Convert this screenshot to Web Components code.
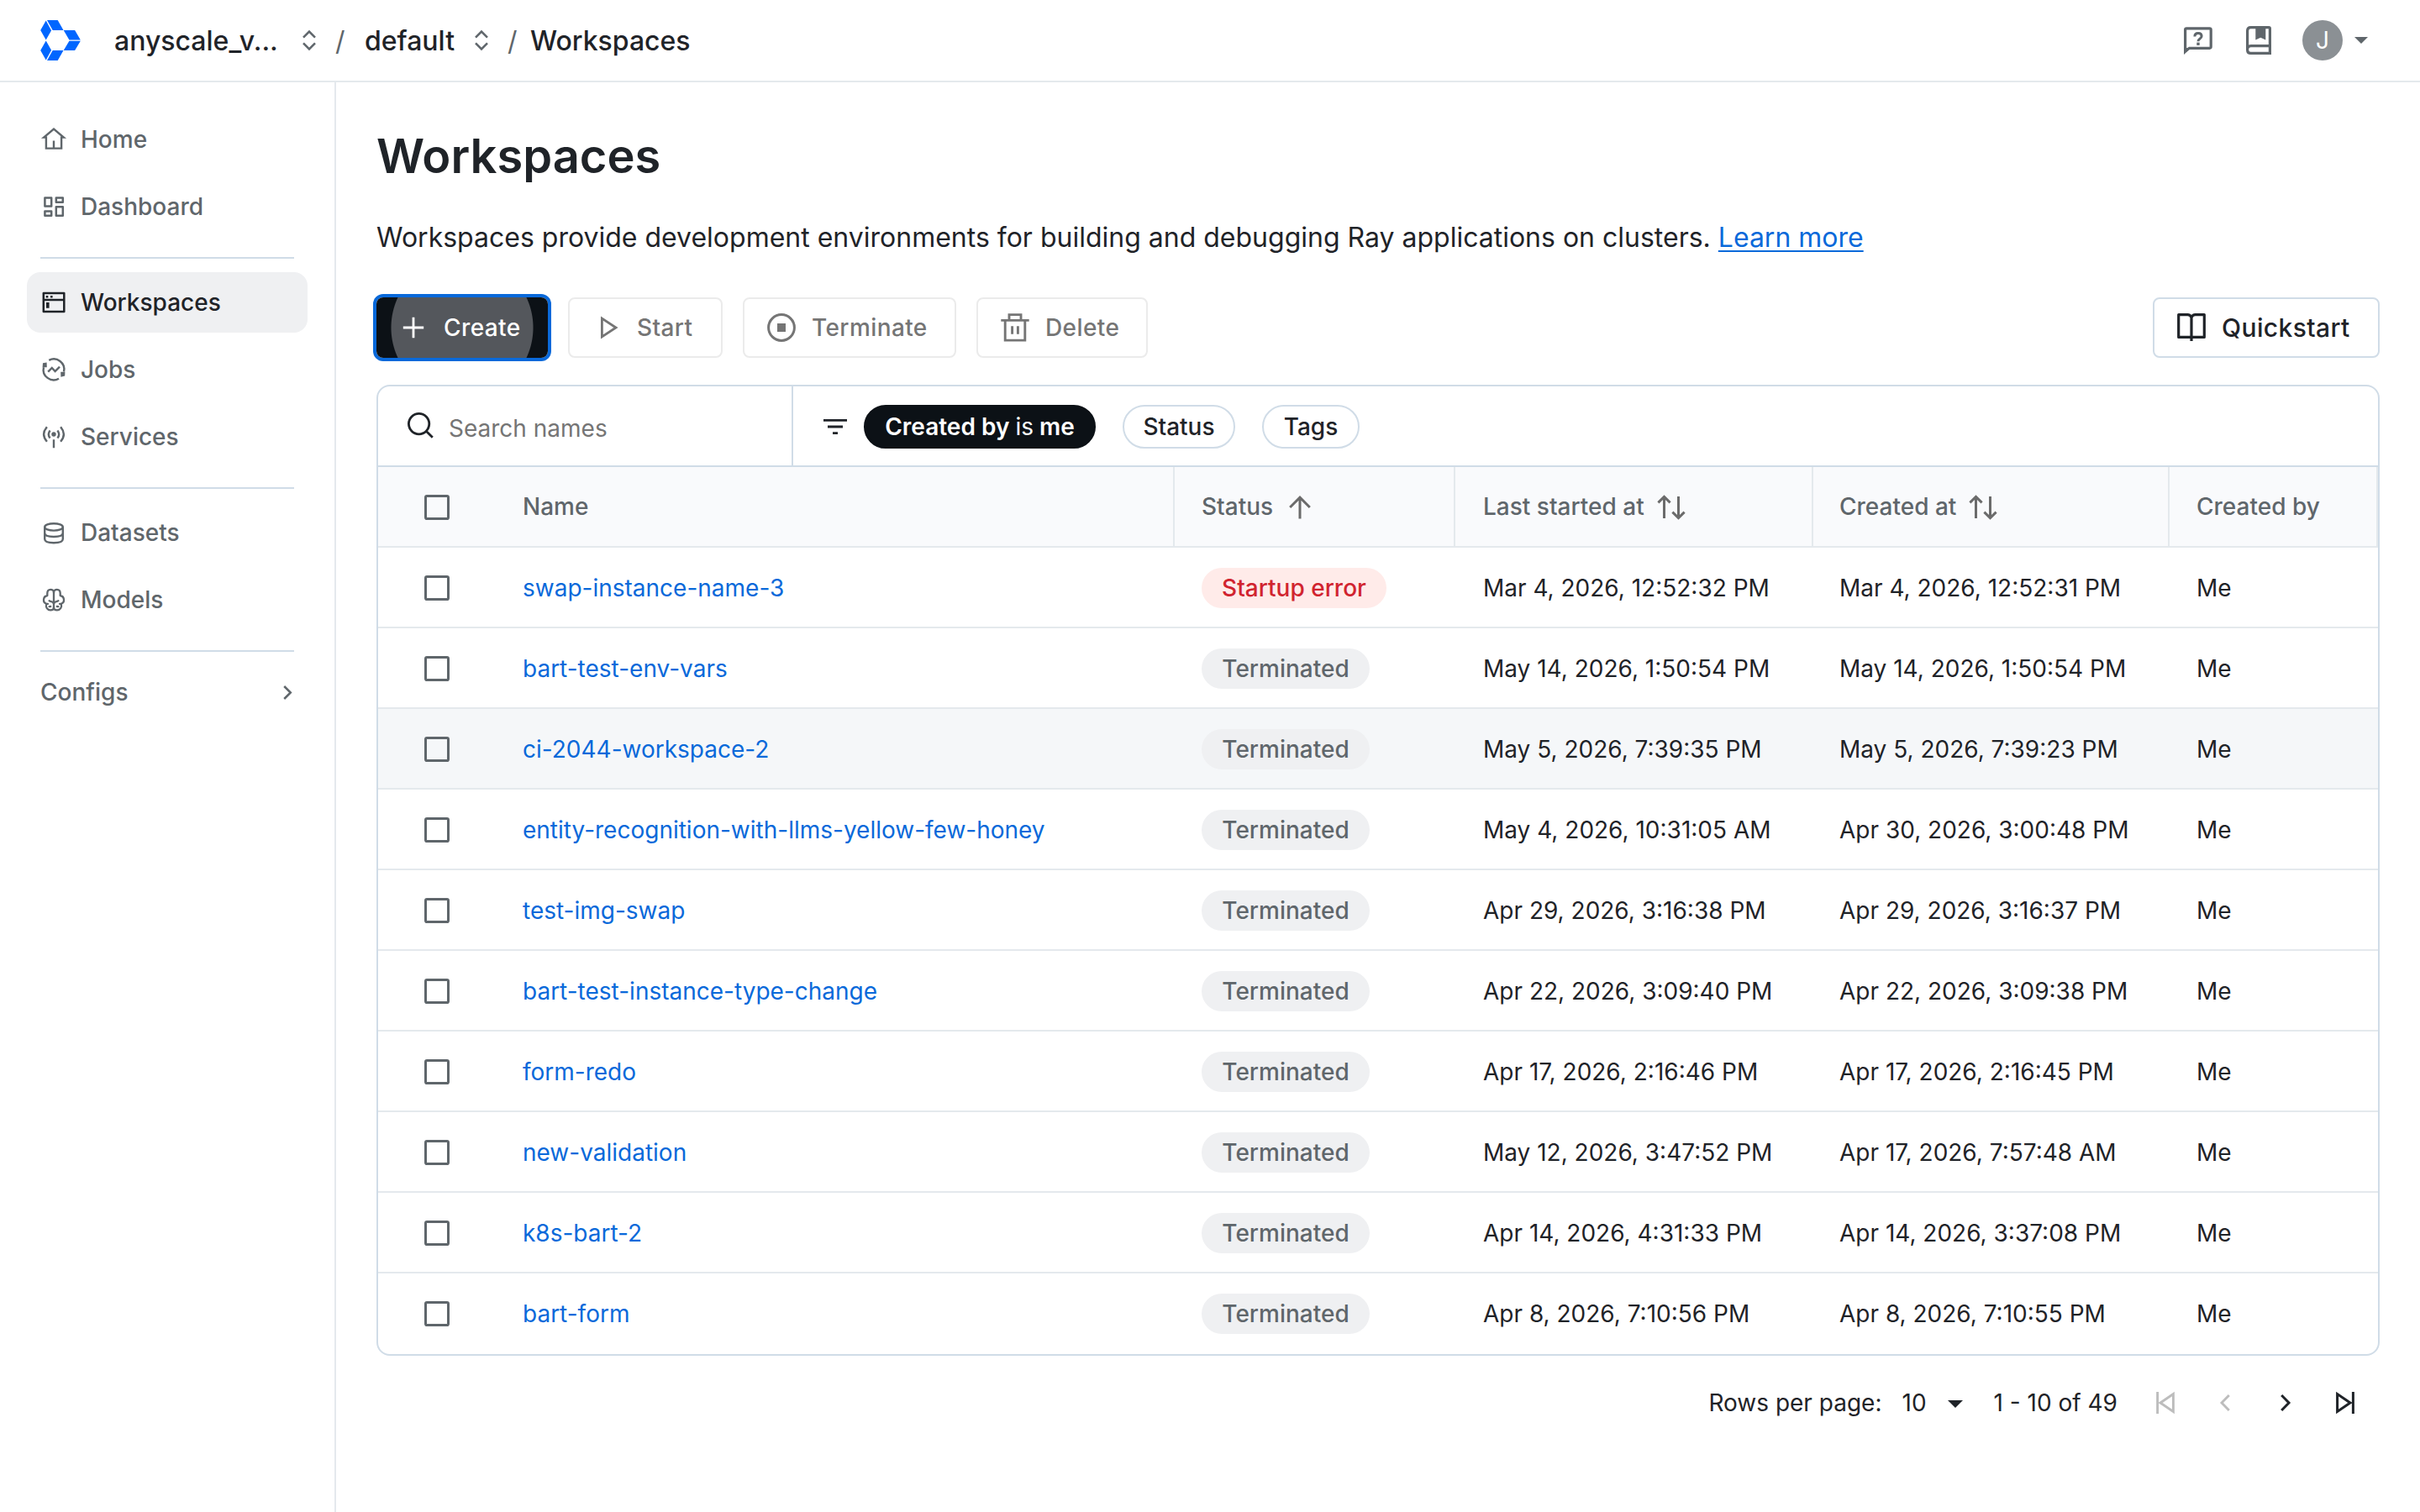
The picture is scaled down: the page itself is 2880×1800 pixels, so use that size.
<!DOCTYPE html>
<html lang="en">
<head>
<meta charset="utf-8">
<title>Workspaces</title>
<style>
  html, body { margin: 0; height: 100%; }
  body {
    background: #fff;
    color: #1f2328;
    font-family: Inter, "Liberation Sans", sans-serif;
    font-size: 28px;
    overflow: hidden;
  }
</style>
</head>
<body>
<app-shell>
  <app-header slot="header"></app-header>
  <side-nav slot="nav">
    <nav-item icon="home">Home</nav-item>
    <nav-item icon="dashboard">Dashboard</nav-item>
    <hr>
    <nav-item icon="workspaces" active>Workspaces</nav-item>
    <nav-item icon="jobs">Jobs</nav-item>
    <nav-item icon="services">Services</nav-item>
    <hr>
    <nav-item icon="datasets">Datasets</nav-item>
    <nav-item icon="models">Models</nav-item>
    <hr class="tight">
    <nav-item expandable>Configs</nav-item>
  </side-nav>
  <workspaces-page></workspaces-page>
</app-shell>

<script>
// name: [width, height, markup]
const ICONS = {
  logo: [48, 48, `<g fill="#0066ff"><path d="M.2 12 6.7.6l6.4 11.6-6.4 11.4zM8 0h12.7l6.8 12H14.7zM27.7 12h13.4l6.7 11.4H34.4zM34.4 24.7h13.4L41.1 36H27.7zM14.7 36h12.8l-6.8 12H8zM6.7 24.4l6.4 11.4-6.4 11.6L.2 36z"/></g>`],
  updown: [16, 24, `<path d="M1 8.6 8 1.6l7 7M1 15.4l7 7 7-7" stroke-width="2.5"/>`],
  chat: [34, 34, `<path d="M1.6 29V3.4Q1.6 1.8 3.2 1.8H30.6Q32.2 1.8 32.2 3.4V23.6Q32.2 25.3 30.6 25.3H6.5Z" stroke-width="3.2"/><path d="M0 24v9l7-6.7z" fill="currentColor" stroke="none"/><path d="M12.9 11.4q0-4 4.1-4t4.1 3.7q0 1.8-2.2 3.2-1.9 1.3-1.9 3" stroke-width="3"/><path d="M15.3 18.6h3.4v3.3h-3.4z" fill="currentColor" stroke="none"/>`],
  guide: [30, 34, `<path d="M28.4 23.6V3Q28.4 1.6 27 1.6H5.6Q1.6 1.6 1.6 5.6V28.5Q1.6 32.4 5.6 32.4H28.4V23.6H5.8Q1.6 23.6 1.6 28" stroke-width="3.2"/><path d="M11.3 2h12v14.6l-6-2.8-6 2.8z" fill="currentColor" stroke="none"/>`],
  caret: [16, 8, `<path d="M0 0h16L8 8z" fill="currentColor" stroke="none"/>`],
  pagecaret: [18, 9, `<path d="M0 0h18L9 9z" fill="currentColor" stroke="none"/>`],
  home: [32, 32, `<path d="M6.9 26.6V13.6H4.2L16 3.6l11.8 10h-2.7v13zM16 17.5v9" stroke-width="2.4"/>`],
  dashboard: [32, 32, `<path d="M5.4 5.4h7.8v10.2H5.4zM18.8 5.4h8v5.4h-8zM5.4 21.5h7.8v5.3H5.4zM18.8 16.2h8v10.6h-8z" stroke-width="2.5" stroke-linejoin="round"/>`],
  workspaces: [32, 32, `<path d="M3.8 5.1h24.5v21.8H3.8zM3.8 13h24.5" stroke-width="2.5" stroke-linejoin="round"/><path d="M6.7 8h2.6v2.6H6.7zM12 8h2.6v2.6H12zM7 16h3.6v6.7H7z" fill="currentColor" stroke="none"/>`],
  jobs: [32, 32, `<path d="M10.3 4.9A12.3 12.3 0 0 1 28 18.5M22 26.8A12.3 12.3 0 0 1 4 13.2M9.2 18.7l4.6-4.8 3.8 4.2 5.4-5.4" stroke-width="2.4"/><path d="M3 8.3 7.6 7.4 7.8 13.2zM29.2 23.5 24.4 24.7 24.2 18.8zM2.6 13.3 3 8.3 7.8 13.2zM29.4 18.7 29.2 23.5 24.2 18.8z" fill="currentColor" stroke="none"/>`],
  services: [32, 32, `<circle cx="16" cy="13" r="2.7" fill="currentColor" stroke="none"/><path d="M16 19.3v10M11.6 8.4q-3.6 4.6 0 9.2M20.4 8.4q3.6 4.6 0 9.2M7.9 4.3q-7.6 8.7 0 17.4M24.1 4.3q7.6 8.7 0 17.4" stroke-width="2.4"/>`],
  datasets: [32, 32, `<ellipse cx="16" cy="9.4" rx="10.8" ry="4.2" stroke-width="2.4"/><path d="M5.2 9.4v14.4q0 4.4 10.8 4.4t10.8-4.4V9.4M5.2 16.6q0 4.4 10.8 4.4t10.8-4.4" stroke-width="2.4"/>`],
  models: [32, 32, `<g stroke-width="2.3" stroke-linecap="round" stroke-linejoin="round"><path d="M16 7.4V25.4"/><path d="M16 7.6C16 2.4 8.3 2.6 8.3 8.2V11C3 12 2.6 19 7 20.6L9 20.9M7.2 21C6 25 8.4 28.4 12 28.4C14.6 28.4 16 27 16 25M10.6 17.2C12.4 18.8 14.6 17.6 16 20.4M10.6 24.2L12.2 24"/><path transform="matrix(-1 0 0 1 32 0)" d="M16 7.6C16 2.4 8.3 2.6 8.3 8.2V11C3 12 2.6 19 7 20.6L9 20.9M7.2 21C6 25 8.4 28.4 12 28.4C14.6 28.4 16 27 16 25M10.6 17.2C12.4 18.8 14.6 17.6 16 20.4M10.6 24.2L12.2 24"/></g>`],
  chevron: [11, 17, `<path d="M1.2 1l7.6 7.5L1.2 16" stroke-width="2.5"/>`],
  plus: [26, 26, `<path d="M13 .8v24.4M.8 13h24.4" stroke-width="2.8"/>`],
  play: [22, 26, `<path d="M2.4 2.2v21.6L19 13z" stroke-width="2.8"/>`],
  stop: [34, 34, `<circle cx="17" cy="17" r="15.4" stroke-width="3"/><path d="M12 12h10v10H12z" fill="currentColor" stroke="none"/>`],
  trash: [34, 34, `<path d="M.3 8.4h33.4M5.2 8.4v23.7h23.6V8.4M10 8.4V1.6h14v6.8M13.6 15.2v9.6M20.4 15.2v9.6" stroke-width="2.9"/>`],
  book: [34, 34, `<path d="M17 5Q15.6 1.6 12.4 1.6H1.7V28.4H32.3V1.6H21.6Q18.4 1.6 17 5ZM17 4.4V33" stroke-width="3.2" stroke-linejoin="round"/>`],
  search: [31, 31, `<circle cx="13.6" cy="13.6" r="12.2" stroke-width="2.8"/><path d="M22.2 22.2l7.6 7.6" stroke-width="2.8"/>`],
  filter: [28, 18, `<path d="M0 1.4h28M5 9h18M11 16.6h6" stroke-width="2.8"/>`],
  box: [30, 30, `<rect x="1.5" y="1.5" width="27" height="27" rx="1.6" stroke-width="3"/>`],
  up: [26, 28, `<path d="M13 27.5V2.2M1.2 14 13 2.2 24.8 14" stroke-width="3"/>`],
  sort: [34, 30, `<path d="M8.5 28V2.6M1.4 9.4l7.1-7 7.1 7M25.5 2v25.6M18.4 20.6l7.1 7 7.1-7" stroke-width="3"/>`],
  first: [22, 26, `<path d="M1.6 0v26M20.4 2.6v20.8L5 13z" stroke-width="2.9"/>`],
  prev: [12, 20, `<path d="M10.8 1 2 10l8.8 9" stroke-width="2.9"/>`],
  next: [12, 20, `<path d="M1.2 1 10 10l-8.8 9" stroke-width="3"/>`],
  last: [22, 26, `<path d="M20.4 0v26M1.6 2.6v20.8L17 13z" stroke-width="3"/>`],
};

class UiIcon extends HTMLElement {
  connectedCallback() {
    if (!this.shadowRoot) this.attachShadow({ mode: "open" });
    const [w, h, markup] = ICONS[this.getAttribute("name")];
    this.shadowRoot.innerHTML = `
      <style>
        :host { display: inline-flex; flex: none; }
        svg { display: block; fill: none; stroke: currentColor; overflow: visible; }
        g[fill] { stroke: none; }
      </style>
      <svg width="${w}" height="${h}" viewBox="0 0 ${w} ${h}" aria-hidden="true">${markup}</svg>`;
  }
}

class AppShell extends HTMLElement {
  constructor() {
    super();
    this.attachShadow({ mode: "open" }).innerHTML = `
      <style>
        :host { display: flex; flex-direction: column; height: 100vh; }
        .body { display: flex; flex: 1; min-height: 0; }
        .page { flex: 1; min-width: 0; }
      </style>
      <slot name="header"></slot>
      <div class="body">
        <slot name="nav"></slot>
        <div class="page"><slot></slot></div>
      </div>`;
  }
}

class AppHeader extends HTMLElement {
  constructor() {
    super();
    this.attachShadow({ mode: "open" }).innerHTML = `
      <style>
        :host {
          display: flex;
          align-items: center;
          box-sizing: border-box;
          height: 98px;
          padding: 0 62px 0 48px;
          border-bottom: 2px solid #e4e9ed;
          font-size: 32px;
          font-weight: 500;
          color: #1f2328;
        }
        ui-icon, .sep { color: #5f666b; }
        .org { margin-left: 40px; width: 197px; }
        .org + ui-icon { margin-left: 27px; }
        .sep { font-weight: 400; width: 10px; margin: 0 25px 0 23px; }
        .project { width: 107px; margin-right: 24px; }
        .project + ui-icon + .sep { margin-right: 17px; }
        .actions { display: flex; align-items: center; margin-left: auto; }
        .actions ui-icon[name="chat"] { margin-top: 2px; }
        .avatar {
          display: flex;
          align-items: center;
          justify-content: center;
          width: 48px;
          height: 48px;
          margin: 0 14px 0 37px;
          border-radius: 50%;
          background: #8b9094;
          color: #fff;
          font-size: 28px;
          font-weight: 400;
        }
        .guide { margin-left: 40px; }
      </style>
      <ui-icon name="logo"></ui-icon>
      <span class="org">anyscale_v...</span>
      <ui-icon name="updown"></ui-icon>
      <span class="sep">/</span>
      <span class="project">default</span>
      <ui-icon name="updown"></ui-icon>
      <span class="sep">/</span>
      <span>Workspaces</span>
      <div class="actions">
        <ui-icon name="chat"></ui-icon>
        <ui-icon class="guide" name="guide"></ui-icon>
        <span class="avatar">J</span>
        <ui-icon name="caret"></ui-icon>
      </div>`;
  }
}

class SideNav extends HTMLElement {
  constructor() {
    super();
    this.attachShadow({ mode: "open" }).innerHTML = `
      <style>
        :host {
          display: flex;
          flex-direction: column;
          gap: 8px;
          box-sizing: border-box;
          width: 400px;
          padding: 32px 32px 0;
          border-right: 2px solid #e4e9ed;
        }
        ::slotted(hr) {
          width: 302px;
          height: 2px;
          margin: 16px 0 8px 16px;
          border: 0;
          background: #d0dce7;
        }
        ::slotted(hr.tight) { margin-bottom: 4px; }
      </style>
      <slot></slot>`;
  }
}

class NavItem extends HTMLElement {
  connectedCallback() {
    if (this.shadowRoot) return;
    this.attachShadow({ mode: "open" });
    const icon = this.getAttribute("icon");
    this.shadowRoot.innerHTML = `
      <style>
        :host {
          display: flex;
          align-items: center;
          gap: 16px;
          box-sizing: border-box;
          height: 72px;
          padding: 0 18px 0 16px;
          border-radius: 16px;
          color: #5f666b;
          font-weight: 500;
        }
        :host([active]) { background: #eff0f2; color: #1f2328; }
        .more { margin-left: auto; }
      </style>
      ${icon ? `<ui-icon name="${icon}"></ui-icon>` : ""}
      <slot></slot>
      ${this.hasAttribute("expandable") ? `<ui-icon class="more" name="chevron"></ui-icon>` : ""}`;
  }
}

class UiButton extends HTMLElement {
  connectedCallback() {
    if (this.shadowRoot) return;
    this.attachShadow({ mode: "open" });
    this.shadowRoot.innerHTML = `
      <style>
        :host {
          display: flex;
          align-items: center;
          box-sizing: border-box;
          width: var(--w);
          height: 72px;
          border: 2px solid #d0dce7;
          border-radius: 8px;
          padding-left: 24px;
          color: #1f2328;
          font-weight: 500;
          letter-spacing: 0.4px;
        }
        :host([large]) { font-size: 30px; }
        :host([disabled]) { border-color: #ebebeb; color: #757575; }
        :host([primary]) {
          border: 0;
          padding-left: 25px;
          background: radial-gradient(circle at 102px 36px, #54575c 84px, #0c1116 85px);
          color: #fff;
          box-shadow: 0 0 0 4px #0969da;
        }
        .icon { display: flex; justify-content: center; width: 40px; margin-right: 16px; }
        .icon ui-icon[name="play"] { margin-left: 6px; }
        :host([primary]) .icon { width: 37px; margin-right: 18px; }
      </style>
      <span class="icon"><ui-icon name="${this.getAttribute("icon")}"></ui-icon></span>
      <slot></slot>`;
  }
}

class UiChip extends HTMLElement {
  constructor() {
    super();
    this.attachShadow({ mode: "open" }).innerHTML = `
      <style>
        :host {
          display: flex;
          align-items: center;
          justify-content: center;
          box-sizing: border-box;
          width: var(--w);
          height: 52px;
          border: 2px solid #d0dce7;
          border-radius: 26px;
          font-weight: 500;
          white-space: pre;
        }
        :host([selected]) {
          border-color: #0c1116;
          background: #0c1116;
          color: #fff;
          font-weight: 600;
        }
        ::slotted(span) { font-weight: 400; }
      </style>
      <slot></slot>`;
  }
}

class StatusBadge extends HTMLElement {
  constructor() {
    super();
    this.attachShadow({ mode: "open" }).innerHTML = `
      <style>
        :host {
          display: inline-flex;
          align-items: center;
          justify-content: center;
          width: 200px;
          height: 48px;
          border-radius: 24px;
          background: #eff0f2;
          color: #5f666b;
          font-weight: 500;
        }
        :host([error]) { width: 220px; background: #ffebe9; color: #d1242f; }
      </style>
      <slot></slot>`;
  }
}

const ROWS = [
  ["swap-instance-name-3", "Startup error", "Mar 4, 2026, 12:52:32 PM", "Mar 4, 2026, 12:52:31 PM"],
  ["bart-test-env-vars", "Terminated", "May 14, 2026, 1:50:54 PM", "May 14, 2026, 1:50:54 PM"],
  ["ci-2044-workspace-2", "Terminated", "May 5, 2026, 7:39:35 PM", "May 5, 2026, 7:39:23 PM"],
  ["entity-recognition-with-llms-yellow-few-honey", "Terminated", "May 4, 2026, 10:31:05 AM", "Apr 30, 2026, 3:00:48 PM"],
  ["test-img-swap", "Terminated", "Apr 29, 2026, 3:16:38 PM", "Apr 29, 2026, 3:16:37 PM"],
  ["bart-test-instance-type-change", "Terminated", "Apr 22, 2026, 3:09:40 PM", "Apr 22, 2026, 3:09:38 PM"],
  ["form-redo", "Terminated", "Apr 17, 2026, 2:16:46 PM", "Apr 17, 2026, 2:16:45 PM"],
  ["new-validation", "Terminated", "May 12, 2026, 3:47:52 PM", "Apr 17, 2026, 7:57:48 AM"],
  ["k8s-bart-2", "Terminated", "Apr 14, 2026, 4:31:33 PM", "Apr 14, 2026, 3:37:08 PM"],
  ["bart-form", "Terminated", "Apr 8, 2026, 7:10:56 PM", "Apr 8, 2026, 7:10:55 PM"],
];
const HOVERED_ROW = 2;

class WorkspaceTable extends HTMLElement {
  constructor() {
    super();
    this.attachShadow({ mode: "open" });
  }

  connectedCallback() {
    this.shadowRoot.innerHTML = `
      <style>
        :host {
          display: block;
          border: 2px solid #d0dce7;
          border-radius: 16px;
          overflow: hidden;
        }
        .toolbar {
          display: flex;
          height: 94px;
          border-bottom: 2px solid #d0dce7;
        }
        .search {
          display: flex;
          align-items: center;
          box-sizing: border-box;
          width: 494px;
          padding-left: 35px;
          gap: 18px;
          border-right: 2px solid #d0dce7;
          color: #757575;
        }
        .search ui-icon { color: #1f2328; margin-top: -2px; }
        .search span { padding-top: 6px; }
        .filters { display: flex; align-items: center; gap: 32px; padding: 2px 0 0 36px; }
        .filters ui-icon { margin-right: -12px; }
        .row {
          display: grid;
          grid-template-columns: 140px 808px 334px 426px 424px 248px;
          height: 94px;
          border-bottom: 2px solid #e4e9ed;
        }
        .row:last-child { border-color: transparent; }
        .row.hovered { background: #f5f7f9; }
        .head { background: #f9fafc; color: #5f666b; font-weight: 500; }
        .cell { display: flex; align-items: center; padding: 2px 0 0 32px; }
        .cell:first-child { padding-left: 55px; color: #5f666b; }
        .cell:nth-child(4) { padding-left: 33px; }
        .cell:nth-child(5) { padding-left: 31px; }
        .head .cell { gap: 19px; }
        .head .cell:nth-child(n + 2) { padding-top: 0; padding-bottom: 1px; border-right: 2px solid #e4e9ed; }
        .head .cell.sortable { gap: 15px; }
        .head .cell ui-icon { margin-top: 3px; color: #6b6b6b; }
        .head .cell:first-child ui-icon { margin-top: 0; color: #5f666b; }
        .name { color: #0969da; }
      </style>
      <div class="toolbar">
        <div class="search"><ui-icon name="search"></ui-icon><span>Search names</span></div>
        <div class="filters">
          <ui-icon name="filter"></ui-icon>
          <ui-chip selected style="--w:276px">Created by <span>is</span> me</ui-chip>
          <ui-chip style="--w:134px">Status</ui-chip>
          <ui-chip style="--w:116px">Tags</ui-chip>
        </div>
      </div>
      <div class="row head">
        <div class="cell"><ui-icon name="box"></ui-icon></div>
        <div class="cell">Name</div>
        <div class="cell">Status <ui-icon name="up"></ui-icon></div>
        <div class="cell sortable">Last started at <ui-icon name="sort"></ui-icon></div>
        <div class="cell sortable">Created at <ui-icon name="sort"></ui-icon></div>
        <div class="cell">Created by</div>
      </div>
      ${ROWS.map((row, i) => this._row(row, i === HOVERED_ROW)).join("")}`;
  }

  _row([name, status, started, created], hovered) {
    return `
      <div class="row${hovered ? " hovered" : ""}">
        <div class="cell"><ui-icon name="box"></ui-icon></div>
        <div class="cell name">${name}</div>
        <div class="cell"><status-badge${status === "Terminated" ? "" : " error"}>${status}</status-badge></div>
        <div class="cell">${started}</div>
        <div class="cell">${created}</div>
        <div class="cell">Me</div>
      </div>`;
  }
}

class TablePager extends HTMLElement {
  constructor() {
    super();
    this.attachShadow({ mode: "open" }).innerHTML = `
      <style>
        :host {
          display: flex;
          align-items: center;
          justify-content: flex-end;
          height: 112px;
          padding-right: 30px;
        }
        .size { margin: 0 25px 0 24px; }
        .size + ui-icon { margin-top: 2px; }
        .range { margin: 0 46px 0 37px; }
        .off { color: #bdbdbd; }
        .nav { display: flex; align-items: center; gap: 54px; }
        .nav ui-icon:nth-child(3) { margin-left: 6px; }
      </style>
      <span class="label">Rows per page:</span>
      <span class="size">10</span>
      <ui-icon name="pagecaret"></ui-icon>
      <span class="range">1 - 10 of 49</span>
      <div class="nav">
        <ui-icon class="off" name="first"></ui-icon>
        <ui-icon class="off" name="prev"></ui-icon>
        <ui-icon name="next"></ui-icon>
        <ui-icon name="last"></ui-icon>
      </div>`;
  }
}

class WorkspacesPage extends HTMLElement {
  constructor() {
    super();
    this.attachShadow({ mode: "open" }).innerHTML = `
      <style>
        :host { display: block; padding: 56px 48px 0; }
        h1 { margin: 0 0 41px; font-size: 56px; line-height: 64px; font-weight: 600; }
        p { margin: 0 0 47px; font-size: 32px; line-height: 48px; }
        a { color: #0969da; text-decoration: underline; text-underline-offset: 4px; text-decoration-thickness: 2px; }
        .actions { display: flex; gap: 24px; margin-bottom: 32px; }
        .actions ui-button:last-child { margin-left: auto; }
      </style>
      <h1>Workspaces</h1>
      <p>Workspaces provide development environments for building and debugging Ray applications on clusters. <a>Learn more</a></p>
      <div class="actions">
        <ui-button primary icon="plus" style="--w:204px">Create</ui-button>
        <ui-button disabled icon="play" style="--w:184px">Start</ui-button>
        <ui-button disabled icon="stop" style="--w:254px">Terminate</ui-button>
        <ui-button disabled icon="trash" style="--w:204px">Delete</ui-button>
        <ui-button large icon="book" style="--w:270px">Quickstart</ui-button>
      </div>
      <workspace-table></workspace-table>
      <table-pager></table-pager>`;
  }
}

customElements.define("ui-icon", UiIcon);
customElements.define("ui-button", UiButton);
customElements.define("ui-chip", UiChip);
customElements.define("status-badge", StatusBadge);
customElements.define("nav-item", NavItem);
customElements.define("side-nav", SideNav);
customElements.define("app-header", AppHeader);
customElements.define("workspace-table", WorkspaceTable);
customElements.define("table-pager", TablePager);
customElements.define("workspaces-page", WorkspacesPage);
customElements.define("app-shell", AppShell);
</script>
</body>
</html>
